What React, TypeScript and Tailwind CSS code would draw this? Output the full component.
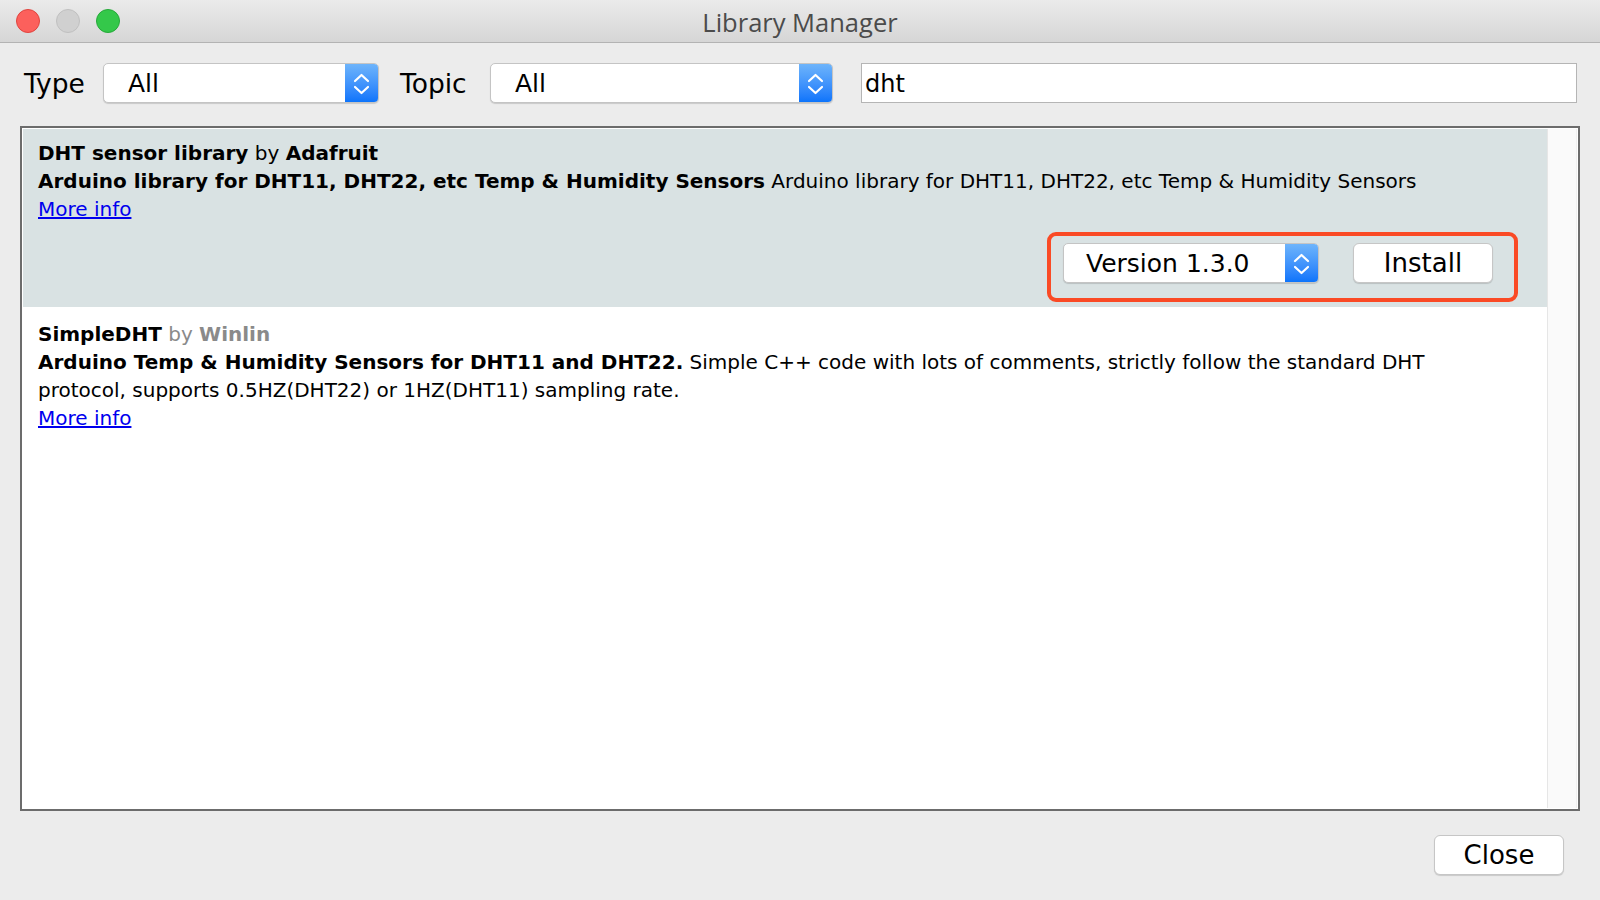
import React from "react";

function Chevrons() {
  return (
    <svg width="33" height="39" viewBox="0 0 33 39" fill="none">
      <path d="M10 17 L16.5 11 L23 17" stroke="white" strokeWidth="2.2" strokeLinecap="round" strokeLinejoin="round" />
      <path d="M10 23 L16.5 29 L23 23" stroke="white" strokeWidth="2.2" strokeLinecap="round" strokeLinejoin="round" />
    </svg>
  );
}

function Select({ label, width, textPad = "pl-[23px]" }: { label: string; width: string; textPad?: string }) {
  return (
    <div
      className={`flex h-[40px] ${width} shrink-0 overflow-hidden rounded-[5px] border border-[#c4c4c4] bg-white shadow-[0_1px_1px_rgba(0,0,0,0.15)]`}
    >
      <div className={`flex flex-1 items-center ${textPad} text-[25px] leading-none text-black`}>{label}</div>
      <div className="flex w-[33px] items-center justify-center bg-linear-to-b from-[#6db4fb] to-[#0b74fb]">
        <Chevrons />
      </div>
    </div>
  );
}

function Button({ label, width }: { label: string; width: string }) {
  return (
    <div
      className={`flex h-[40px] ${width} shrink-0 items-center justify-center rounded-[6px] border border-[#c6c6c6] bg-white text-[26px] leading-none text-black shadow-[0_1px_1px_rgba(0,0,0,0.15)]`}
    >
      {label}
    </div>
  );
}

export default function App() {
  return (
    <div
      className="flex h-[900px] w-[1600px] flex-col overflow-hidden bg-[#ececec]"
      style={{ fontFamily: '"DejaVu Sans", Verdana, sans-serif' }}
    >
      {/* Title bar */}
      <div className="relative flex h-[43px] shrink-0 items-center border-b border-[#b3b3b3] bg-linear-to-b from-[#ebebeb] to-[#d6d6d6] pl-[16px]">
        <div className="flex gap-[16px]">
          <div className="h-[24px] w-[24px] rounded-full border border-[#e0443e] bg-[#fc605c]" />
          <div className="h-[24px] w-[24px] rounded-full border border-[#c0c0c0] bg-[#d0d0d0]" />
          <div className="h-[24px] w-[24px] rounded-full border border-[#26a93a] bg-[#34c84a]" />
        </div>
        <div
          className="absolute inset-0 flex items-center justify-center pt-[2px] text-[25.5px] text-[#4b4b4b]"
          style={{ fontFamily: '"Open Sans", "Noto Sans", sans-serif' }}
        >
          Library Manager
        </div>
      </div>

      {/* Toolbar */}
      <div className="mt-[20px] flex h-[40px] shrink-0 items-center pl-[24px] pr-[23px]">
        <span className="w-[79px] shrink-0 pt-[3px] text-[26.5px] leading-none text-black">Type</span>
        <Select label="All" width="w-[276px]" textPad="pl-[24px]" />
        <span className="ml-[21px] w-[90px] shrink-0 pt-[3px] text-[26.5px] leading-none text-black">Topic</span>
        <Select label="All" width="w-[343px]" textPad="pl-[24px]" />
        <div className="ml-[28px] flex h-[40px] flex-1 items-center border border-[#b5b5b5] bg-white pl-[3px] pt-[2px] text-[24px] leading-none text-black">
          dht
        </div>
      </div>

      {/* List */}
      <div className="mx-[20px] mt-[23px] flex h-[685px] shrink-0 border-2 border-[#6c6c6c] bg-white p-[1px]">
        <div className="flex flex-1 flex-col text-[20px] leading-[28px] text-black">
          {/* Item 1 */}
          <div className="flex flex-col bg-[#d9e2e3] pb-[5px] pl-[15px] pt-[10px]">
            <div>
              <span className="font-bold">DHT sensor library</span> by <span className="font-bold">Adafruit</span>
            </div>
            <div className="whitespace-nowrap">
              <span className="font-bold">Arduino library for DHT11, DHT22, etc Temp &amp; Humidity Sensors</span> Arduino
              library for DHT11, DHT22, etc Temp &amp; Humidity Sensors
            </div>
            <div>
              <span className="cursor-pointer text-[#0000ee] underline">More info</span>
            </div>
            <div className="mr-[29px] mt-[9px] flex justify-end">
              <div className="flex gap-[34px] rounded-[9px] border-[4px] border-[#fa4a25] pb-[15px] pl-[12px] pr-[21px] pt-[7px]">
                <Select label="Version 1.3.0" width="w-[256px]" textPad="pl-[22px]" />
                <Button label="Install" width="w-[140px]" />
              </div>
            </div>
          </div>
          {/* Item 2 */}
          <div className="flex flex-col pl-[15px] pt-[13px]">
            <div>
              <span className="font-bold">SimpleDHT</span> <span className="text-[#8a8a8a]">by</span>{" "}
              <span className="font-bold text-[#8a8a8a]">Winlin</span>
            </div>
            <div className="whitespace-nowrap">
              <span className="font-bold">Arduino Temp &amp; Humidity Sensors for DHT11 and DHT22.</span> Simple C++ code
              with lots of comments, strictly follow the standard DHT
            </div>
            <div className="whitespace-nowrap">protocol, supports 0.5HZ(DHT22) or 1HZ(DHT11) sampling rate.</div>
            <div>
              <span className="cursor-pointer text-[#0000ee] underline">More info</span>
            </div>
          </div>
        </div>
        {/* Scrollbar track */}
        <div className="w-[30px] shrink-0 border-l border-r border-l-[#e6e6e6] border-r-[#f0f0f0] bg-[#fafafa]" />
      </div>

      {/* Footer */}
      <div className="mt-[24px] flex justify-end pr-[36px]">
        <Button label="Close" width="w-[130px]" />
      </div>
    </div>
  );
}
